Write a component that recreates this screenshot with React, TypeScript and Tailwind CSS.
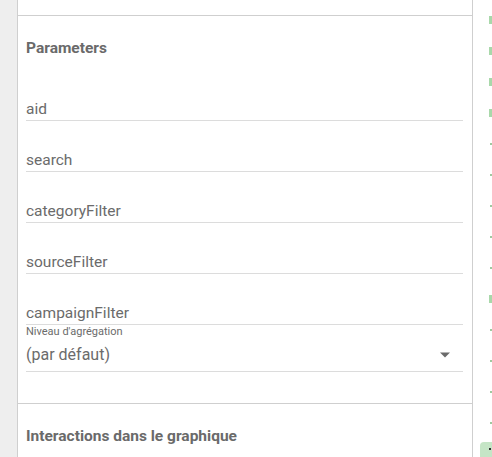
import React from 'react';

const fields = ['aid', 'search', 'categoryFilter', 'sourceFilter', 'campaignFilter'];

// right gutter markers: 'bar' = green tick, 'dot' = small dot
const marks = ['bar', 'bar', 'bar', 'bar', 'dot', 'dot', 'dot', 'dot', 'dot', 'bar', 'dot', 'dot', 'dot', 'dot'];

function TextField({ label }: { label: string }) {
  return (
    <div className="h-[51px] flex flex-col justify-end border-b border-[#dcdcdc]">
      <div className="text-[15.5px] leading-[20px] pb-[1px] text-[#6b6b6b]">{label}</div>
    </div>
  );
}

export default function App() {
  return (
    <div className="flex h-[457px] w-[492px] overflow-hidden bg-white" style={{ fontFamily: 'Roboto, "Liberation Sans", sans-serif' }}>
      <div className="w-[17px] shrink-0 bg-[#eeeeee]" />

      <div className="w-[456px] shrink-0 border-l border-r border-[#cfcfcf] bg-white flex flex-col">
        <div className="h-[16px] shrink-0 border-b border-[#cfcfcf]" />

        <div className="px-[8px] pt-[22px] border-b border-[#cfcfcf]">
          <div className="text-[15.5px] leading-[20px] font-bold text-[#6a6a6a]">Parameters</div>
          <div className="mt-[12px] pr-[1px]">
            {fields.map((f) => (
              <TextField key={f} label={f} />
            ))}
            <div className="border-b border-[#dcdcdc]">
              <div className="text-[11px] leading-[12px] pt-[1px] text-[#6b6b6b]">Niveau d'agrégation</div>
              <div className="mt-[5px] pb-[4px] flex items-center justify-between">
                <span className="text-[16px] leading-[24px] text-[#6b6b6b]">(par défaut)</span>
                <svg width="10" height="6" viewBox="0 0 10 5" className="mr-[13px]">
                  <path d="M0 0h10L5 5z" fill="#6b6b6b" />
                </svg>
              </div>
            </div>
            <div className="h-[31px]" />
          </div>
        </div>

        <div className="px-[8px] pt-[22px]">
          <div className="text-[15.5px] leading-[20px] font-bold text-[#6a6a6a]">Interactions dans le graphique</div>
        </div>
      </div>

      <div className="flex-1 flex flex-col pt-[4.5px]">
        {marks.map((m, i) => (
          <div key={i} className="h-[31px] shrink-0 flex items-center">
            {m === 'bar' ? (
              <div className="ml-[16px] w-[3px] h-[8px] bg-[#a9d8aa]" />
            ) : (
              <div className="ml-[17px] w-[2px] h-[2px] bg-[#9fc9a0]" />
            )}
          </div>
        ))}
        <div className="mt-[3px] ml-[7px] flex-1 rounded-tl-[4px] bg-[#c5e5c6] flex items-center">
          <div className="ml-[9px] w-[2px] h-[2px] bg-[#333]" />
        </div>
      </div>
    </div>
  );
}
